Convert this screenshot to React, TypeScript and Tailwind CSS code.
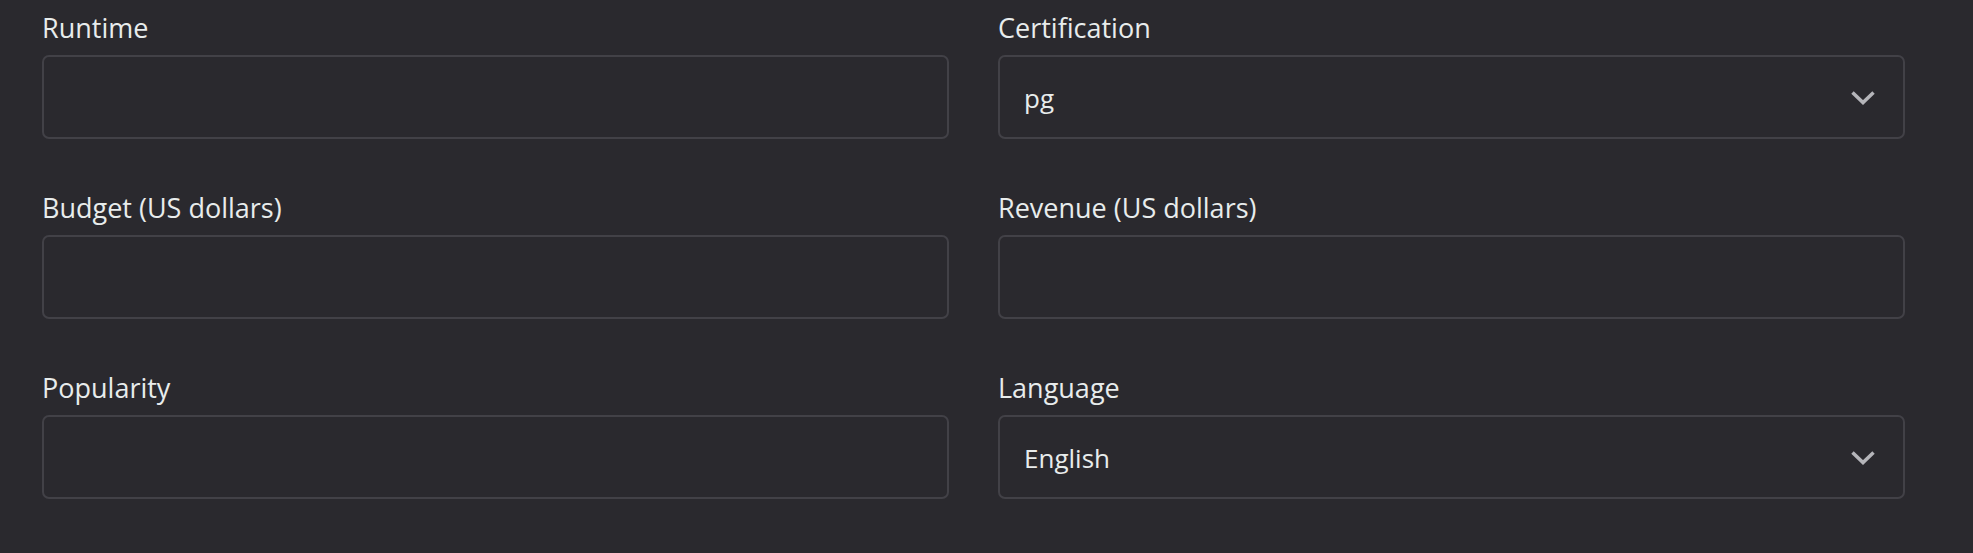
import React from "react";

const Chevron = () => (
  <svg width="26" height="15" viewBox="0 0 26 15" fill="none" className="shrink-0">
    <path d="M2.5 2.5 L13 12.5 L23.5 2.5" stroke="#b5b5ba" strokeWidth="3.5" />
  </svg>
);

type Field = { label: string; value?: string; select?: boolean };

const fields: Field[] = [
  { label: "Runtime" },
  { label: "Certification", value: "pg", select: true },
  { label: "Budget (US dollars)" },
  { label: "Revenue (US dollars)" },
  { label: "Popularity" },
  { label: "Language", value: "English", select: true },
];

const App = () => {
  return (
    <div className="h-[553px] w-full bg-[#2a292e] pl-[42px] pr-[68px] text-[#e8ecec] font-['Open_Sans',sans-serif] overflow-hidden">
      <div className="grid grid-cols-2 gap-x-[49px] gap-y-[41px]">
        {fields.map((f) => (
          <div key={f.label} className="flex flex-col">
            <label className="text-[27px] leading-[38px] pt-[9px] mb-[8px]">{f.label}</label>
            <div className="h-[84px] rounded-[7px] border-2 border-[#424147] bg-[#2a292e] flex items-center justify-between pl-[24px] pr-[27px]">
              <span className="text-[26px] pt-[3px]">{f.value ?? ""}</span>
              {f.select && <Chevron />}
            </div>
          </div>
        ))}
      </div>
    </div>
  );
};

export default App;
